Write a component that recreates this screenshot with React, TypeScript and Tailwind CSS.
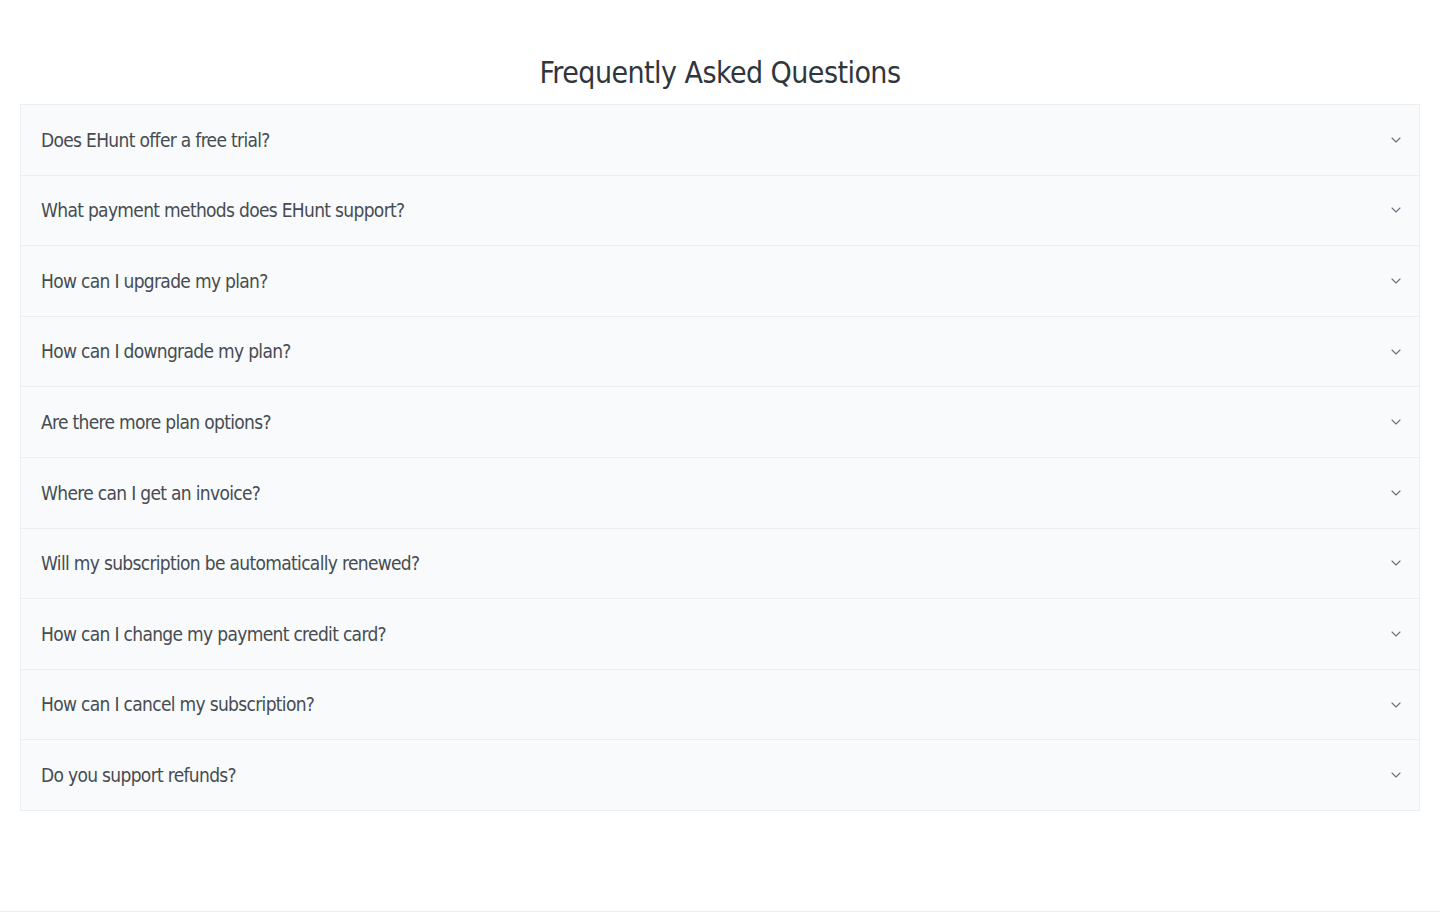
import React from "react";

const questions = [
  "Does EHunt offer a free trial?",
  "What payment methods does EHunt support?",
  "How can I upgrade my plan?",
  "How can I downgrade my plan?",
  "Are there more plan options?",
  "Where can I get an invoice?",
  "Will my subscription be automatically renewed?",
  "How can I change my payment credit card?",
  "How can I cancel my subscription?",
  "Do you support refunds?",
];

function Chevron() {
  return (
    <svg width="10" height="6" viewBox="0 0 10 6" fill="none" className="text-[#6b7280]">
      <path d="M1 1l4 4 4-4" stroke="currentColor" strokeWidth="1.1" strokeLinecap="round" strokeLinejoin="round" />
    </svg>
  );
}

export default function App() {
  return (
    <div
      className="min-h-[915px] bg-white flex flex-col"
      style={{ fontFamily: '"DejaVu Sans Condensed", "Liberation Sans", sans-serif' }}
    >
      <div className="px-5 pt-[51px] flex-1">
        <h1 className="text-center text-[30px] leading-[44px] text-[#30363c] mb-[9px] tracking-[-0.55px]">
          Frequently Asked Questions
        </h1>
        <div className="border border-[#eceff2] border-b-0">
          {questions.map((q) => (
            <div
              key={q}
              className="h-[70.6px] flex items-center justify-between pl-5 pr-[18px] bg-[#f8fafb] border-b border-[#eceff2]"
            >
              <span className="text-[19px] tracking-[-0.68px] text-[#474c52]">{q}</span>
              <Chevron />
            </div>
          ))}
        </div>
      </div>
      <div className="h-[4px] border-t border-[#eceff1]" />
    </div>
  );
}
